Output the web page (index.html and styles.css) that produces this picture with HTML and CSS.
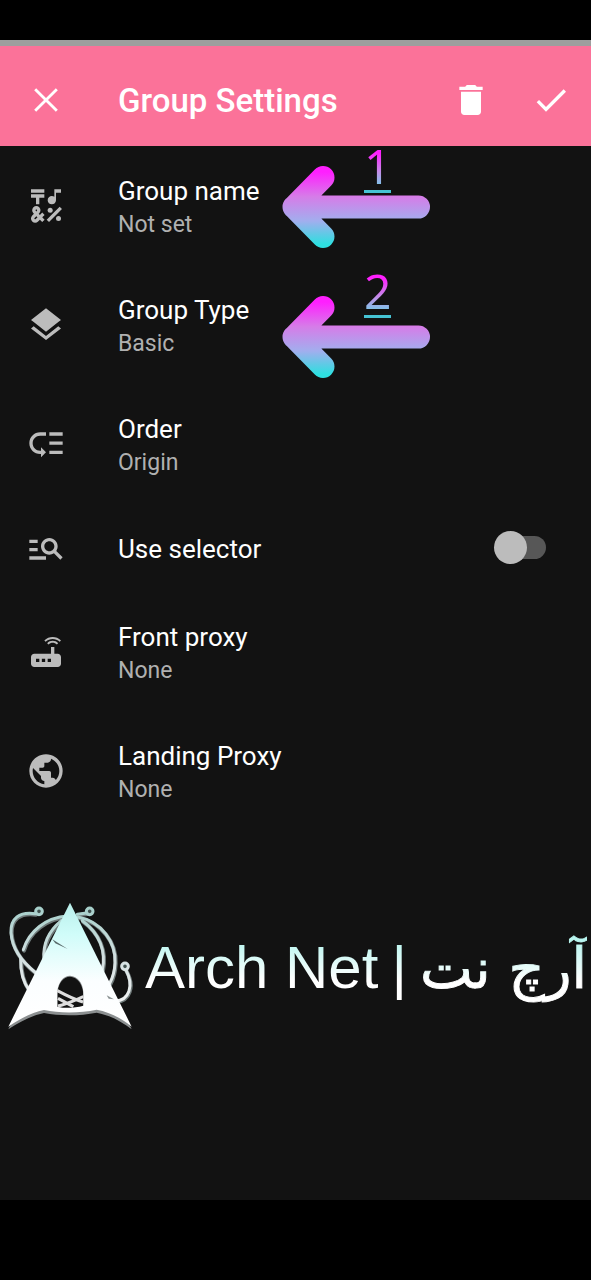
FILE: index.html
```html
<!DOCTYPE html>
<html lang="en">
<head>
<meta charset="utf-8">
<meta name="viewport" content="width=device-width, initial-scale=1">
<title>Group Settings</title>
<link rel="stylesheet" href="styles.css">
</head>
<body>
<div class="screen">
  <header class="app-bar">
    <button class="icon-button" type="button" aria-label="Close">
      <svg class="icon" viewBox="0 0 24 24"><path d="M5.500 5.500l13 13M18.500 5.500l-13 13" fill="none" stroke="currentColor" stroke-width="1.700"/></svg>
    </button>
    <h1 class="app-title">Group Settings</h1>
    <button class="icon-button" type="button" aria-label="Delete">
      <svg class="icon" viewBox="0 0 24 24"><path d="M6 19c0 1.100.9 2 2 2h8c1.100 0 2-.9 2-2V7H6v12zM19 4h-3.500l-1-1h-5l-1 1H5v2h14V4z"/></svg>
    </button>
    <button class="icon-button" type="button" aria-label="Save">
      <svg class="icon" viewBox="0 0 24 24"><path d="M9 16.170L4.830 12l-1.420 1.410L9 19 21 7l-1.410-1.410z"/></svg>
    </button>
  </header>

  <main class="content">
    <ul class="settings">
      <li class="item">
        <button class="row" type="button">
          <svg class="icon" viewBox="0 0 24 24"><path d="M3 2h8v2H3zM6 11h2V7h3V5H3v2h3zM12.404 20.182l7.778-7.778 1.414 1.414-7.778 7.778z"/><circle cx="14.500" cy="14.500" r="1.500"/><circle cx="19.500" cy="19.500" r="1.500"/><path d="M15.500 11c1.380 0 2.500-1.120 2.500-2.500V4h3V2h-4v4.510c-.42-.32-.93-.51-1.500-.51-1.380 0-2.500 1.120-2.500 2.500s1.120 2.500 2.500 2.500zM9.740 15.960l-1.410 1.410-.71-.71.35-.35c.98-.98.98-2.560 0-3.540-.49-.49-1.130-.73-1.770-.73s-1.280.24-1.770.73c-.98.98-.98 2.560 0 3.540l.35.35-1.060 1.060c-.98.98-.98 2.560 0 3.540.5.5 1.140.74 1.780.74s1.280-.24 1.770-.73l1.060-1.060 1.410 1.410 1.410-1.410-1.410-1.410 1.410-1.410-1.410-1.430zM5.850 14.200c.12-.12.26-.15.35-.15s.23.03.35.15c.19.2.19.51 0 .71l-.35.35-.35-.36c-.19-.19-.19-.51 0-.7zm0 5.650c-.12.12-.26.15-.35.15s-.23-.03-.35-.15c-.19-.2-.19-.51 0-.71l1.060-1.060.71.71-1.070 1.060z"/></svg>
          <span class="text"><span class="label">Group name</span><span class="value">Not set</span></span>
        </button>
        <span class="step step-first">1</span>
        <svg class="arrow arrow-first" viewBox="0 0 148 82" aria-hidden="true">
          <defs><linearGradient id="arrow-fill" gradientUnits="userSpaceOnUse" x1="0" y1="6" x2="0" y2="78"><stop offset="0" stop-color="#ff1fff"/><stop offset=".34" stop-color="#d67ce8"/><stop offset=".68" stop-color="#a2aeee"/><stop offset="1" stop-color="#2edfe0"/></linearGradient></defs>
          <path d="M41 11.500L12 41l29 29.500M12 41h124.500" fill="none" stroke="url(#arrow-fill)" stroke-width="23" stroke-linecap="round" stroke-linejoin="round"/>
        </svg>
      </li>
      <li class="item">
        <button class="row" type="button">
          <svg class="icon" viewBox="0 0 24 24"><path d="M11.990 18.540l-7.370-5.730L3 14.070l9 7 9-7-1.630-1.270-7.380 5.740zM12 16l7.360-5.730L21 9l-9-7-9 7 1.630 1.270L12 16z"/></svg>
          <span class="text"><span class="label">Group Type</span><span class="value">Basic</span></span>
        </button>
        <span class="step step-second">2</span>
        <svg class="arrow arrow-second" viewBox="0 0 148 82" aria-hidden="true">
          <path d="M41 11.500L12 41l29 29.500M12 41h124.500" fill="none" stroke="url(#arrow-fill)" stroke-width="23" stroke-linecap="round" stroke-linejoin="round"/>
        </svg>
      </li>
      <li class="item">
        <button class="row" type="button">
          <svg class="icon" viewBox="0 0 24 24"><path d="M14 5h8v2h-8zm0 5.500h8v2h-8zm0 5.500h8v2h-8zM2 11.500C2 15.080 4.920 18 8.500 18H9v2l3-3-3-3v2h-.5C6.020 16 4 13.980 4 11.500S6.020 7 8.500 7H12V5H8.500C4.920 5 2 7.920 2 11.500z"/></svg>
          <span class="text"><span class="label">Order</span><span class="value">Origin</span></span>
        </button>
      </li>
      <li class="item">
        <label class="row row-single">
          <svg class="icon" viewBox="0 0 24 24"><path d="M7 9H2V7h5v2zm0 3H2v2h5v-2zm13.590 7l-3.830-3.830c-.8.52-1.740.83-2.760.83-2.760 0-5-2.240-5-5s2.240-5 5-5 5 2.240 5 5c0 1.020-.31 1.960-.83 2.750L22 17.590 20.590 19zM17 11c0-1.650-1.350-3-3-3s-3 1.350-3 3 1.350 3 3 3 3-1.350 3-3zM2 19h10v-2H2v2z"/></svg>
          <span class="text"><span class="label">Use selector</span></span>
          <input class="switch" type="checkbox">
        </label>
      </li>
      <li class="item">
        <button class="row" type="button">
          <svg class="icon" viewBox="0 0 24 24"><path d="M20.200 5.900l.8-.8C19.600 3.700 17.800 3 16 3s-3.600.7-5 2.100l.8.8C13 4.800 14.500 4.200 16 4.200s3 .6 4.200 1.700zm-.9.8c-.9-.9-2.100-1.400-3.300-1.400s-2.400.5-3.300 1.400l.8.8c.7-.7 1.600-1 2.500-1 .9 0 1.800.3 2.500 1l.8-.8zM19 13h-2V9h-2v4H5c-1.100 0-2 .9-2 2v4c0 1.100.9 2 2 2h14c1.100 0 2-.9 2-2v-4c0-1.100-.9-2-2-2zM8 18H6v-2h2v2zm3.500 0h-2v-2h2v2zm3.500 0h-2v-2h2v2z"/></svg>
          <span class="text"><span class="label">Front proxy</span><span class="value">None</span></span>
        </button>
      </li>
      <li class="item">
        <button class="row" type="button">
          <svg class="icon" viewBox="0 0 24 24"><path d="M12 2C6.480 2 2 6.480 2 12s4.480 10 10 10 10-4.480 10-10S17.520 2 12 2zm-1 17.930c-3.950-.49-7-3.850-7-7.930 0-.62.08-1.210.21-1.790L9 15v1c0 1.100.9 2 2 2v1.930zm6.900-2.540c-.26-.81-1-1.390-1.900-1.390h-1v-3c0-.55-.45-1-1-1H8v-2h2c.55 0 1-.45 1-1V7h2c1.100 0 2-.9 2-2v-.41c2.930 1.190 5 4.060 5 7.410 0 2.080-.8 3.970-2.100 5.390z"/></svg>
          <span class="text"><span class="label">Landing Proxy</span><span class="value">None</span></span>
        </button>
      </li>
    </ul>

    <div class="brand">
      <svg class="brand-mark" viewBox="0 0 405 450" role="img" aria-label="Arch Net logo">
        <defs>
          <linearGradient id="mark" gradientUnits="userSpaceOnUse" x1="0" y1="40" x2="0" y2="400"><stop offset="0" stop-color="#b9efeb"/><stop offset=".25" stop-color="#cffcf9"/><stop offset=".65" stop-color="#fbfeff"/><stop offset="1" stop-color="#fff"/></linearGradient>
          <linearGradient id="wire" gradientUnits="userSpaceOnUse" x1="0" y1="50" x2="0" y2="360"><stop offset="0" stop-color="#a5cfca"/><stop offset=".5" stop-color="#d3e0e1"/><stop offset="1" stop-color="#f5f5f5"/></linearGradient>
          <g id="orbits" fill="none" stroke-linecap="round">
            <path d="M106 71C58 64 31 86 33 128C36 176 66 216 108 249"/>
            <path d="M70 179C87 124 137 82 203 78"/>
            <path d="M62 206C61 240 69 276 88 302"/>
            <path d="M184 92C146 123 128 159 132 208"/>
            <path d="M232 73L260 69"/>
            <path d="M233 81C305 94 348 158 345 218C344 244 338 264 329 280"/>
            <path d="M247 92C298 129 319 183 307 239"/>
            <path d="M378 241C403 287 387 331 346 333L322 317"/>
          </g>
        </defs>
        <use href="#orbits" stroke="#6f7a7a" stroke-width="12" transform="translate(2 3)"/>
        <use href="#orbits" stroke="url(#wire)" stroke-width="9"/>
        <g fill="#40514f" stroke="url(#wire)" stroke-width="9"><circle cx="117" cy="64" r="10"/><circle cx="269" cy="64" r="10"/><circle cx="375" cy="229" r="10"/></g>
        <path d="M210 44L25 418C66 392 97 376 132 369C178 378 240 378 290 368C328 375 362 393 395 418zM172 352V314C173 280 190 260 210 260C233 261 249 284 250 313V350C224 357 198 358 172 352z" fill="#8b8f90" fill-rule="evenodd"/>
        <path d="M210 38L25 410C65 383 99 366 132 360C178 370 240 370 290 359C328 366 362 383 395 410zM172 350V306C174 277 190 257 210 257C233 258 249 279 250 306V347C224 354 198 356 172 350z" fill="url(#mark)" fill-rule="evenodd"/>
        <path d="M157 148L203 177L166 160z" fill="#596b6b"/>
        <path d="M320 316l22 12-16-2z" fill="#8b9393"/>
        <path d="M172 302C198 316 220 328 249 336M174 348C201 342 226 330 250 320M174 325L220 350" fill="none" stroke="#dedede" stroke-width="9"/>
      </svg>
      <div class="brand-text">
        <span class="brand-name">Arch Net</span>
        <span class="brand-name">|</span>
        <span class="brand-name brand-local" lang="fa" dir="rtl">آرچ نت</span>
      </div>
    </div>
  </main>
</div>
</body>
</html>
```

FILE: styles.css
```css
* {
  box-sizing: border-box;
}

body {
  margin: 0;
  background: #000;
  color: #fff;
  font-family: Roboto, "Noto Sans", sans-serif;
}

.screen {
  display: flex;
  flex-direction: column;
  min-height: 100vh;
  padding: 40px 0 80px;
}

.app-bar {
  display: flex;
  align-items: center;
  gap: 40px;
  padding: 32px 20px 24px 26px;
  border-top: 6px solid #9e9e9e;
  background: #fb7299;
}

.app-title {
  flex: 1;
  margin: 0 0 0 12px;
  padding-top: 2px;
  font-size: 33px;
  font-weight: 500;
  line-height: 42px;
}

.icon-button {
  display: flex;
  padding: 0;
  border: 0;
  background: none;
  color: #fff;
}

.icon {
  flex: none;
  width: 40px;
  height: 40px;
  fill: currentColor;
}

.content {
  flex: 1;
  background: #121212;
}

.settings {
  margin: 0;
  padding: 0;
  list-style: none;
}

.item {
  position: relative;
}

.row {
  display: flex;
  align-items: center;
  gap: 52px;
  width: 100%;
  min-height: 119px;
  padding: 0 45px 0 26px;
  border: 0;
  background: none;
  color: #bcbcbc;
  font: inherit;
  text-align: left;
}

.row-single {
  min-height: 89px;
}

.text {
  display: flex;
  flex: 1;
  flex-direction: column;
  padding-top: 5px;
}

.row-single .text {
  padding-top: 2px;
}

.label {
  color: #fff;
  font-size: 26px;
  line-height: 34px;
}

.value {
  color: #b0b0b0;
  font-size: 23px;
  line-height: 34px;
}

.switch {
  position: relative;
  flex: none;
  width: 52px;
  height: 33px;
  margin: 0;
  appearance: none;
}

.switch::before,
.switch::after {
  position: absolute;
  content: "";
}

.switch::before {
  inset: 5px 0 5px 5px;
  border-radius: 12px;
  background: #575757;
}

.switch::after {
  top: 0;
  left: 0;
  width: 33px;
  height: 33px;
  border-radius: 50%;
  background: #bcbcbc;
}

.switch:checked::after {
  left: 19px;
}

.step {
  position: absolute;
  left: 364px;
  width: 27px;
  padding-bottom: 2px;
  border-bottom: 3px solid #45c3d3;
  background: linear-gradient(#ff1fff 20%, #c48ce8 60%, #6fd0e8 95%) padding-box text;
  color: transparent;
  font-family: "Noto Sans", "Open Sans", sans-serif;
  font-size: 48px;
  line-height: 44px;
  text-align: center;
}

.step-first {
  top: -2px;
}

.step-second {
  top: 4px;
}

.arrow {
  position: absolute;
  left: 282px;
  width: 148px;
  height: 82px;
}

.arrow-first {
  top: 20px;
}

.arrow-second {
  top: 31px;
}

.brand {
  display: flex;
  align-items: center;
  gap: 10px;
  padding-top: 60px;
}

.brand-mark {
  flex: none;
  width: 135px;
  height: 150px;
}

.brand-text {
  display: flex;
  align-items: baseline;
  gap: 13px;
  padding-top: 6px;
}

.brand-name {
  background: linear-gradient(#b8f5ef 15%, #fff 65%) text;
  color: transparent;
  font-family: "Liberation Sans", Arial, sans-serif;
  font-size: 60px;
  line-height: 80px;
  white-space: nowrap;
}

.brand-local {
  font-family: "DejaVu Sans", sans-serif;
  font-size: 56px;
  -webkit-text-stroke: 1px transparent;
}
```
